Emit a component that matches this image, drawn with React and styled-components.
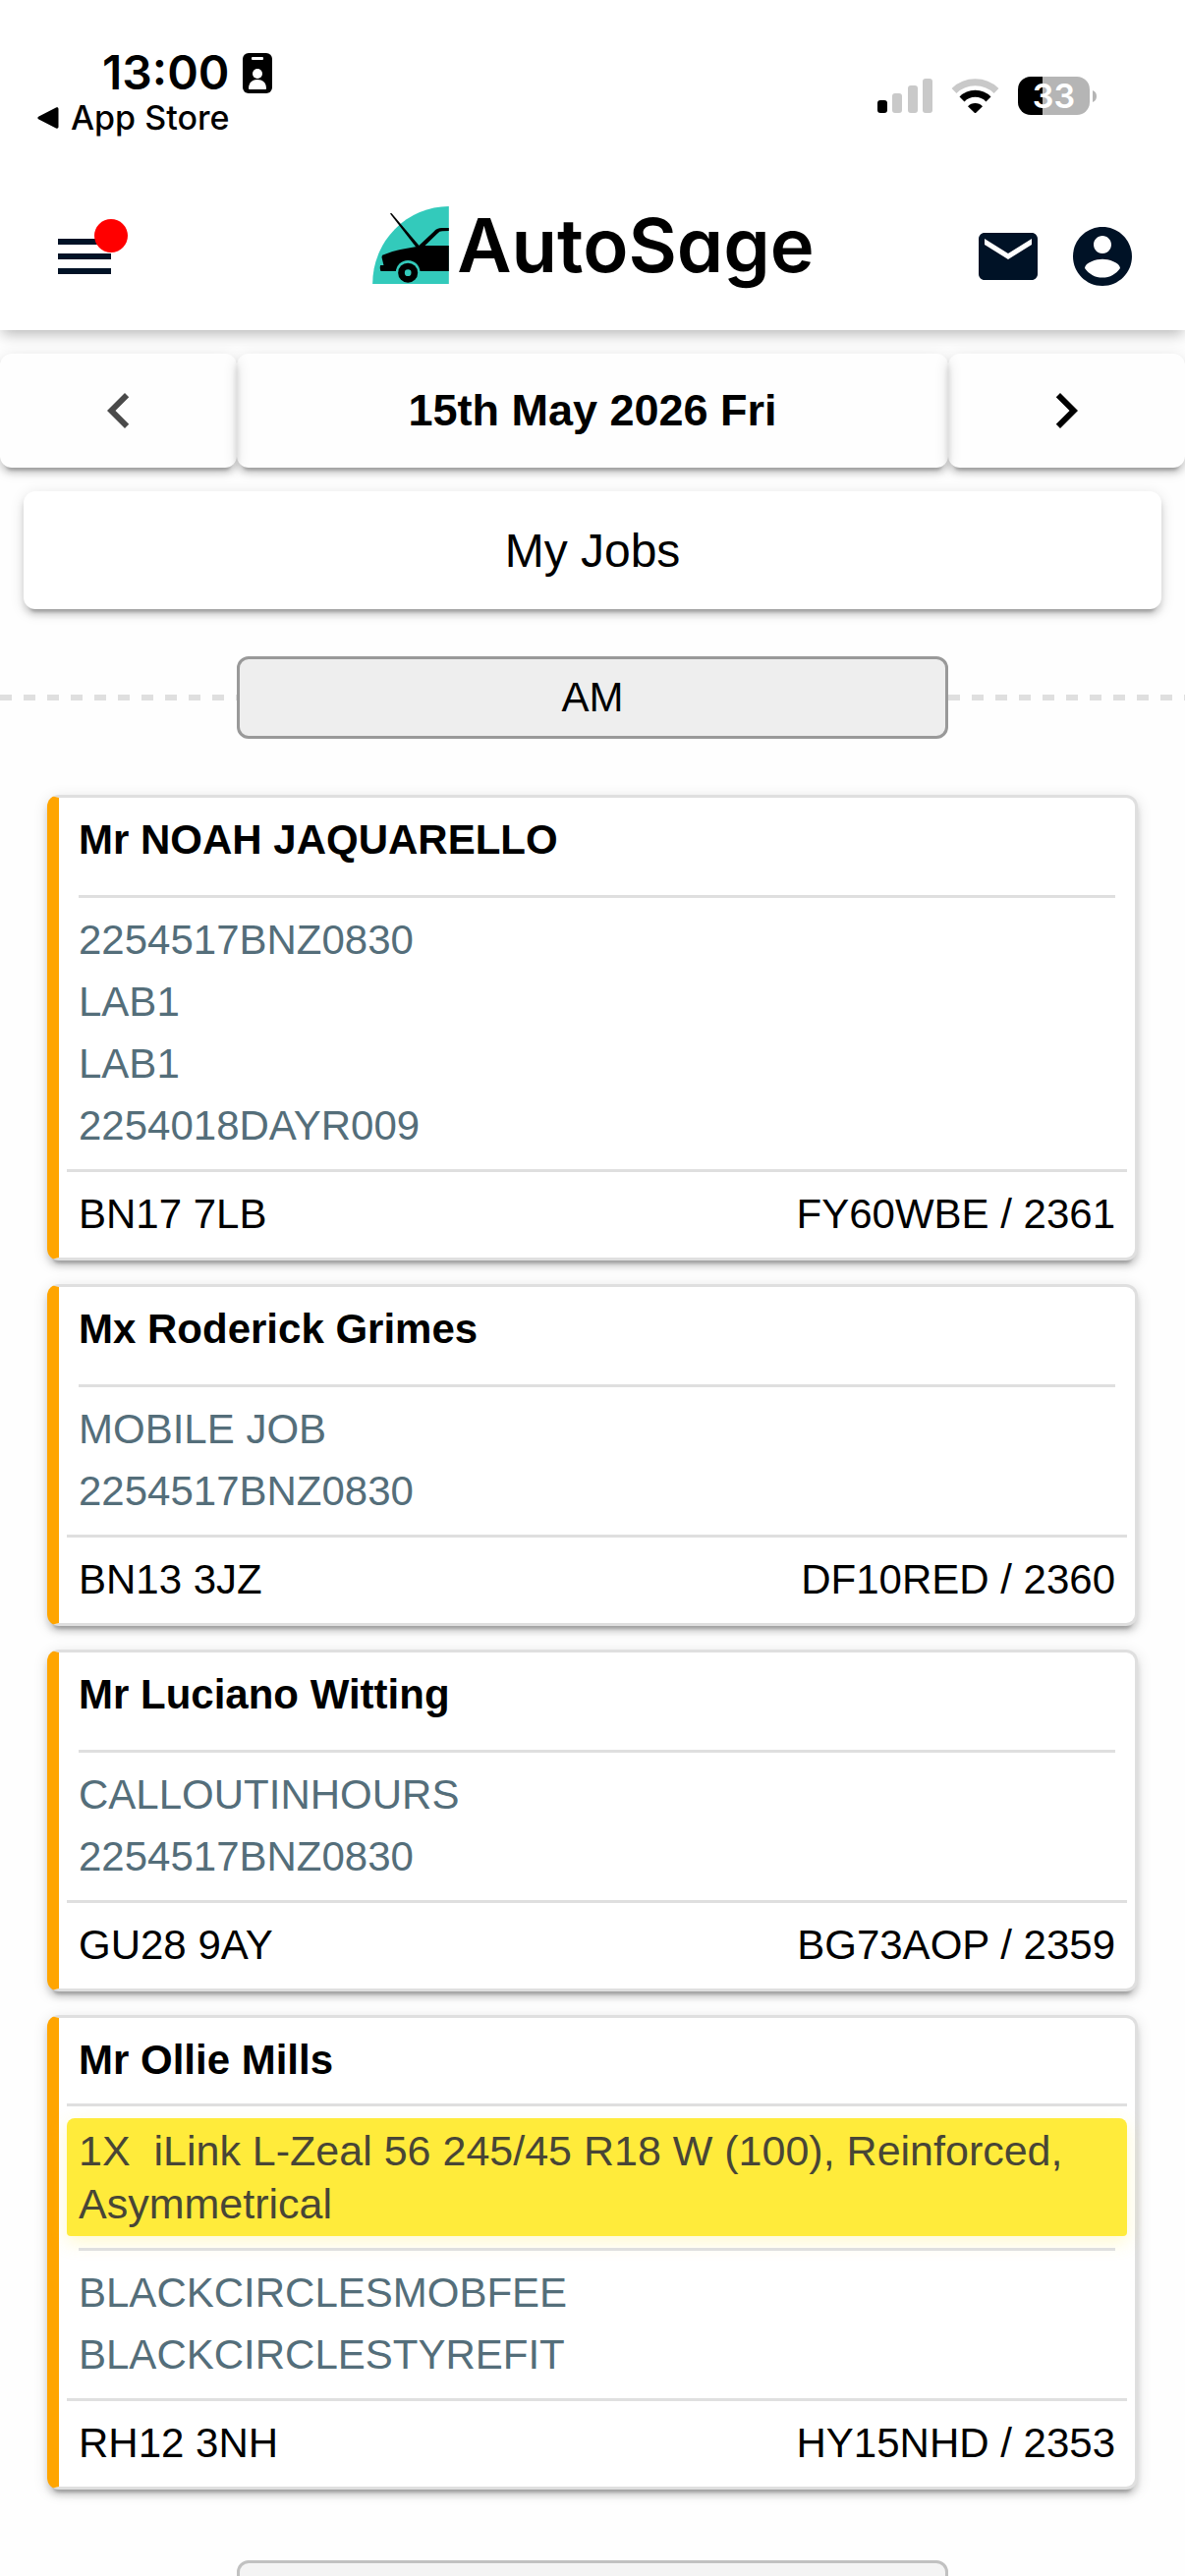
import React from "react";
import styled, { createGlobalStyle } from "styled-components";

const GlobalStyle = createGlobalStyle`
  * {
    box-sizing: border-box;
  }
  body {
    margin: 0;
    background: #fefefe;
    color: #000;
    font-family: "Liberation Sans", Arial, sans-serif;
    font-size: 42px;
  }
  button {
    font-family: inherit;
    color: inherit;
    cursor: pointer;
  }
  svg {
    display: block;
  }
`;

const raised = `
  box-shadow: 0 9px 3px -6px rgba(0, 0, 0, 0.2), 0 6px 6px rgba(0, 0, 0, 0.14),
    0 3px 15px rgba(0, 0, 0, 0.12);
`;

const Page = styled.div`
  height: 100vh;
  overflow: hidden;
`;

// status bar
const StatusBar = styled.div`
  position: relative;
  z-index: 1;
  display: flex;
  justify-content: space-between;
  height: 186px;
  padding: 46px 90px 0 38px;
  background: #fff;
  font-family: Inter, sans-serif;
`;

const ClockRow = styled.div`
  display: flex;
  align-items: center;
  gap: 14px;
  padding-left: 66px;
  font-size: 48px;
  line-height: 56px;
  font-weight: 600;
`;

const BackLink = styled.a`
  display: flex;
  align-items: center;
  gap: 12px;
  color: #000;
  font-size: 34px;
  line-height: 36px;
  font-weight: 500;
  text-decoration: none;
`;

const Indicators = styled.div`
  display: flex;
  align-items: center;
  gap: 19px;
  height: 39px;
  margin-top: 32px;
`;

const BatteryWrap = styled.div`
  display: flex;
  align-items: center;
  gap: 3px;
`;

const Battery = styled.div`
  width: 73px;
  height: 39px;
  border-radius: 13px;
  background: linear-gradient(to right, #000 34%, #b5b5b5 34%);
  color: #fff;
  font-size: 34px;
  line-height: 39px;
  font-weight: 600;
  text-align: center;
`;

// header
const Header = styled.header`
  display: grid;
  grid-template-columns: 1fr auto 1fr;
  align-items: center;
  height: 150px;
  padding: 0 48px 0 50px;
  background: #fff;
  box-shadow: 0 6px 12px -3px rgba(0, 0, 0, 0.2), 0 6px 18px rgba(0, 0, 0, 0.1);
`;

const IconButton = styled.button`
  position: relative;
  width: 72px;
  height: 72px;
  padding: 0;
  border: none;
  background: none;
  > svg {
    width: 72px;
    height: 72px;
    fill: #001226;
  }
`;

const Badge = styled.span`
  position: absolute;
  top: -2px;
  left: 46px;
  width: 34px;
  height: 34px;
  border-radius: 50%;
  background: #f00;
`;

const Logo = styled.div`
  display: flex;
  align-items: center;
  gap: 8px;
  padding-bottom: 24px;
  font-family: Inter, sans-serif;
  font-feature-settings: "cv11";
  font-size: 76px;
  line-height: 80px;
  font-weight: 600;
`;

const HeaderActions = styled.div`
  display: flex;
  justify-content: flex-end;
  gap: 24px;
`;

// date bar
const DateBar = styled.div`
  display: grid;
  grid-template-columns: 1fr 3fr 1fr;
  margin-top: 24px;
`;

const DateButton = styled.button`
  display: flex;
  align-items: center;
  justify-content: center;
  height: 116px;
  border: none;
  border-radius: 12px;
  background: none;
  font-size: 45px;
  font-weight: bold;
  ${raised}
  > svg {
    width: 72px;
    height: 72px;
    fill: ${(props) => (props.$muted ? "#4a4a4a" : "#000")};
  }
`;

const JobsButton = styled.button`
  display: block;
  width: calc(100% - 48px);
  height: 120px;
  margin: 24px 24px 48px;
  border: none;
  border-radius: 12px;
  background: #fff;
  font-size: 48px;
  ${raised}
`;

// AM / PM divider
const Period = styled.div`
  display: flex;
  align-items: center;
`;

const Dashes = styled.span`
  flex: 1;
  height: 6px;
  background: repeating-linear-gradient(
    to right,
    #dfdfdf 0 12px,
    transparent 12px 24px
  );
`;

const PeriodLabel = styled.div`
  width: 60%;
  height: 84px;
  border: 3px solid #999;
  border-radius: 12px;
  background: #eee;
  line-height: 78px;
  text-align: center;
  opacity: ${(props) => (props.$faded ? 0.6 : 1)};
`;

// job cards
const JobList = styled.main`
  display: flex;
  flex-direction: column;
  gap: 24px;
  padding: 57px 48px 72px;
`;

const Card = styled.article`
  padding: 0 8px;
  border: 3px solid #dfdfdf;
  border-left: 12px solid #ffa500;
  border-radius: 12px;
  background: #fff;
  line-height: 63px;
  ${raised}
`;

const Customer = styled.h2`
  margin: 0;
  padding: 11px 12px ${(props) => (props.$tight ? 13 : 25)}px;
  font-size: 42px;
  font-weight: bold;
`;

const Rule = styled.hr`
  height: 3px;
  margin: 0 ${(props) => (props.$inset ? 12 : 0)}px;
  border: none;
  background: #dfdfdf;
`;

const Tyre = styled.p`
  margin: 12px 0;
  padding: 6px 12px;
  border-radius: 8px 8px 4px 4px;
  background: #ffeb3b;
  box-shadow: 0 6px 18px rgba(255, 235, 59, 0.25);
  color: #484636;
  font-size: 43px;
  line-height: 54px;
  white-space: pre-wrap;
`;

const Codes = styled.ul`
  margin: 0;
  padding: 11px 12px 13px;
  color: #546e7a;
  list-style: none;
`;

const CardFooter = styled.footer`
  display: flex;
  justify-content: space-between;
  padding: 11px 12px 13px;
`;

const jobs = [
  {
    customer: "Mr NOAH JAQUARELLO",
    codes: ["2254517BNZ0830", "LAB1", "LAB1", "2254018DAYR009"],
    postcode: "BN17 7LB",
    reference: "FY60WBE / 2361",
  },
  {
    customer: "Mx Roderick Grimes",
    codes: ["MOBILE JOB", "2254517BNZ0830"],
    postcode: "BN13 3JZ",
    reference: "DF10RED / 2360",
  },
  {
    customer: "Mr Luciano Witting",
    codes: ["CALLOUTINHOURS", "2254517BNZ0830"],
    postcode: "GU28 9AY",
    reference: "BG73AOP / 2359",
  },
  {
    customer: "Mr Ollie Mills",
    tyre: "1X  iLink L-Zeal 56 245/45 R18 W (100), Reinforced, Asymmetrical",
    codes: ["BLACKCIRCLESMOBFEE", "BLACKCIRCLESTYREFIT"],
    postcode: "RH12 3NH",
    reference: "HY15NHD / 2353",
  },
];

const IdBadgeIcon = () => (
  <svg width="30" height="41" viewBox="0 0 30 41">
    <rect width="30" height="41" rx="6" />
    <rect x="9" y="4" width="12" height="3" rx="1" fill="#fff" />
    <circle cx="15" cy="21" r="5" fill="#fff" />
    <path d="M6 36c0-6 4-9 9-9s9 3 9 9c0 1-1 1-1 1H7s-1 0-1-1z" fill="#fff" />
  </svg>
);

const BackIcon = () => (
  <svg width="22" height="22" viewBox="0 0 22 22">
    <path d="M1.500 9.500L19 .6c1.500-.7 2.500 0 2.500 1.400v18c0 1.400-1 2-2.500 1.400L1.500 12.500c-1.600-.8-1.600-2.200 0-3z" />
  </svg>
);

const SignalIcon = () => (
  <svg width="56" height="35" viewBox="0 0 56 35">
    <rect y="22" width="10" height="13" rx="3" />
    <g fill="#c9c9c9">
      <rect x="15" y="15" width="10" height="20" rx="3" />
      <rect x="31" y="7" width="10" height="28" rx="3" />
      <rect x="46" width="10" height="35" rx="3" />
    </g>
  </svg>
);

const WifiIcon = () => (
  <svg width="49" height="35" viewBox="0 0 49 35">
    <g fill="none" strokeWidth="7">
      <path d="M3 12.500a31 31 0 0 1 43 0" stroke="#c9c9c9" />
      <path d="M11 21a19 19 0 0 1 27 0" stroke="#000" />
    </g>
    <path d="M17 28.200a10.500 10.500 0 0 1 15 0L25.500 34.500q-1 1-2 0z" />
  </svg>
);

const CarLogo = () => (
  <svg width="78" height="79" viewBox="0 0 233 237">
    <path d="M0 237A233 237 0 0 1 233 0v237z" fill="#33cabb" />
    <path d="M53 22l5-1 86 101-12 2z" />
    <path d="M30 149q24-11 55-17 22-5 54-10l48-45q9-11 24-11h22v9l-20 1q-9 0-15 7l-38 37h73v78H25q-4-9-1-18h10l-5-20q-2-7 1-11z" />
    <circle cx="108" cy="202" r="37" fill="#33cabb" />
    <circle cx="108" cy="203" r="30" />
    <circle cx="108" cy="203" r="10" fill="#33cabb" />
  </svg>
);

const MenuIcon = () => (
  <svg viewBox="0 0 24 24">
    <path d="M3 18h18v-2H3v2zm0-5h18v-2H3v2zm0-7v2h18V6H3z" />
  </svg>
);

const MailIcon = () => (
  <svg viewBox="0 0 24 24">
    <path d="M20 4H4c-1.100 0-1.990.9-1.990 2L2 18c0 1.100.9 2 2 2h16c1.100 0 2-.9 2-2V6c0-1.100-.9-2-2-2zm0 4l-8 5-8-5V6l8 5 8-5v2z" />
  </svg>
);

const AccountIcon = () => (
  <svg viewBox="0 0 24 24">
    <path d="M12 2C6.480 2 2 6.480 2 12s4.480 10 10 10 10-4.480 10-10S17.520 2 12 2zm0 3c1.660 0 3 1.340 3 3s-1.340 3-3 3-3-1.340-3-3 1.340-3 3-3zm0 14.200c-2.500 0-4.710-1.280-6-3.220.03-1.990 4-3.080 6-3.080 1.990 0 5.970 1.090 6 3.080-1.290 1.940-3.500 3.220-6 3.220z" />
  </svg>
);

const JobCard = ({ job }) => (
  <Card>
    <Customer $tight={Boolean(job.tyre)}>{job.customer}</Customer>
    {job.tyre ? (
      <>
        <Rule />
        <Tyre>{job.tyre}</Tyre>
      </>
    ) : (
      ""
    )}
    <Rule $inset />
    <Codes>
      {job.codes.map((code, index) => (
        <li key={index}>{code}</li>
      ))}
    </Codes>
    <Rule />
    <CardFooter>
      <span>{job.postcode}</span>
      <span>{job.reference}</span>
    </CardFooter>
  </Card>
);

const App = () => {
  return (
    <>
      <GlobalStyle />
      <Page>
        {/* status bar */}
        <StatusBar>
          <div>
            <ClockRow>
              13:00
              <IdBadgeIcon />
            </ClockRow>
            <BackLink href="#">
              <BackIcon />
              App Store
            </BackLink>
          </div>
          <Indicators>
            <SignalIcon />
            <WifiIcon />
            <BatteryWrap>
              <Battery>33</Battery>
              <svg width="4" height="12" viewBox="0 0 4 12">
                <path d="M0 0q4 1.500 4 6t-4 6z" fill="#b5b5b5" />
              </svg>
            </BatteryWrap>
          </Indicators>
        </StatusBar>

        {/* header */}
        <Header>
          <IconButton aria-label="Menu">
            <MenuIcon />
            <Badge />
          </IconButton>
          <Logo>
            <CarLogo />
            <span>AutoSage</span>
          </Logo>
          <HeaderActions>
            <IconButton aria-label="Messages">
              <MailIcon />
            </IconButton>
            <IconButton aria-label="Account">
              <AccountIcon />
            </IconButton>
          </HeaderActions>
        </Header>

        {/* date bar */}
        <DateBar>
          <DateButton $muted aria-label="Previous day">
            <svg viewBox="0 0 24 24">
              <path d="M15.410 7.410L14 6l-6 6 6 6 1.410-1.410L10.830 12z" />
            </svg>
          </DateButton>
          <DateButton>15th May 2026 Fri</DateButton>
          <DateButton aria-label="Next day">
            <svg viewBox="0 0 24 24">
              <path d="M10 6L8.590 7.410 13.170 12l-4.580 4.590L10 18l6-6z" />
            </svg>
          </DateButton>
        </DateBar>
        <JobsButton>My Jobs</JobsButton>

        {/* morning jobs */}
        <Period>
          <Dashes />
          <PeriodLabel>AM</PeriodLabel>
          <Dashes />
        </Period>
        <JobList>
          {jobs.map((job) => (
            <JobCard key={job.reference} job={job} />
          ))}
        </JobList>

        {/* afternoon */}
        <Period>
          <Dashes />
          <PeriodLabel $faded />
          <Dashes />
        </Period>
      </Page>
    </>
  );
};

export default App;
